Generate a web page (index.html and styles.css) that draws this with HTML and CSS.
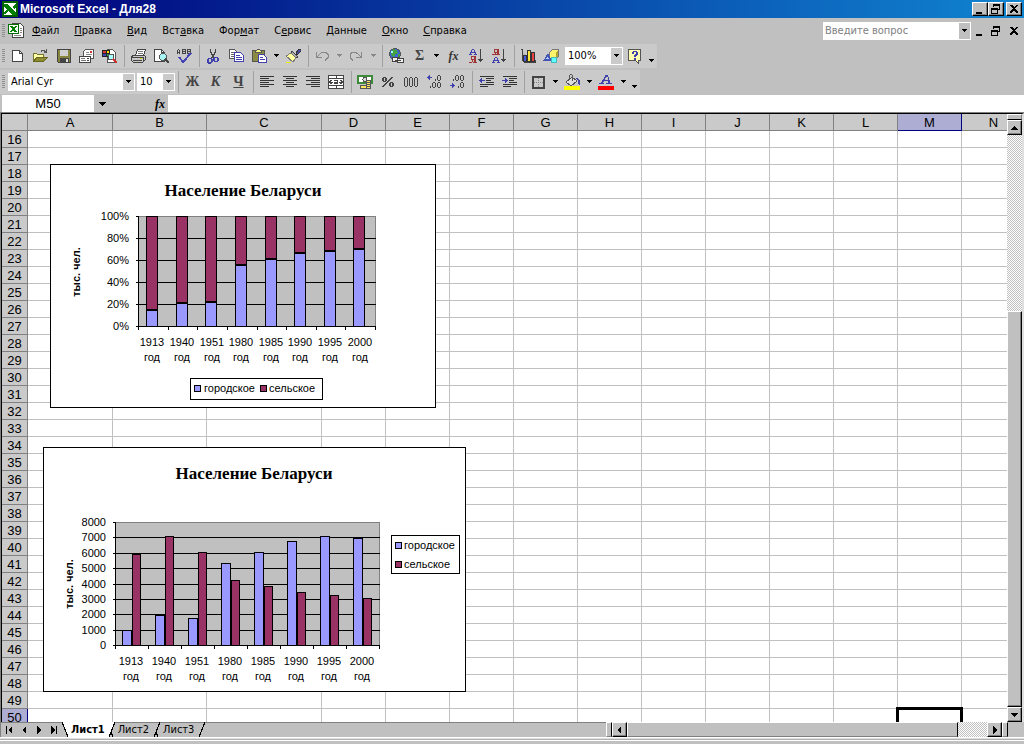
FILE: index.html
```html
<!DOCTYPE html>
<html lang="ru">
<head>
<meta charset="utf-8">
<title>Microsoft Excel - Для28</title>
<link rel="stylesheet" href="styles.css">
</head>
<body>
<svg class="symbols" aria-hidden="true">
  <symbol id="xl" viewBox="0 0 16 16"><path fill="#006000" d="M0 0h16v16H0z"/><path fill="#fff" d="M2 2h12v12H2z"/><path fill="#008000" d="M2 3h4l8 9v2h-4L2 5z"/><path fill="#008000" d="M14 3v3l-2 2-2-2 3-3zM2 13v-2l3-3 1 2-3 3z"/></symbol>
  <symbol id="book" viewBox="0 0 16 16"><path fill="#fff" stroke="#444" d="M4.500 .5h8l3 3v11h-11z"/><path stroke="#888" d="M12 5.500h2M12 7.500h2M12 9.500h2M6 12.500h7"/><path fill="#fff" stroke="#007000" d="M.5 1.500h10v9H.5z"/><path fill="#008000" d="M2 3h3l4 6H6z"/><path stroke="#008000" stroke-width="1.500" d="M8 3L3 9"/></symbol>
  <symbol id="min" viewBox="0 0 12 10"><path fill="#000" d="M2 8h6v2H2z"/></symbol>
  <symbol id="restore" viewBox="0 0 12 10"><path fill="none" stroke="#000" d="M3.500 3V.5h6v5H8M3 1.500h7M1.500 4.500h6v5h-6zM1 5.500h7"/></symbol>
  <symbol id="close" viewBox="0 0 12 10"><path fill="#000" d="M2 1h2l2 2 2-2h2L7 4.500 10 8v1H8L6 6 4 9H2V8l3-3.500z"/></symbol>
  <symbol id="down" viewBox="0 0 7 4"><path fill="currentColor" d="M1 0h5v1H1zM2 1h3v1H2zM3 2h1v1H3z"/></symbol>
  <symbol id="downbig" viewBox="0 0 7 4"><path fill="currentColor" d="M0 0h7v1H0zM1 1h5v1H1zM2 2h3v1H2zM3 3h1v1H3z"/></symbol>
  <symbol id="new" viewBox="0 0 16 16"><path fill="#fff" stroke="#444" d="M3.500 2.500h7l3 3v8h-10z"/><path fill="none" stroke="#444" d="M10.500 2.500v3h3"/></symbol>
  <symbol id="open" viewBox="0 0 16 16"><path fill="#ffffa8" stroke="#77772c" d="M1.500 13.500v-8h3l1 1h6v3"/><path fill="#8d8d2e" stroke="#666620" d="M1.500 13.500l3-4h11l-4 4z"/><path fill="none" stroke="#555" d="M9 3.500l1-1h2l2 2M14.500 1v4M12 4.500h3"/></symbol>
  <symbol id="save" viewBox="0 0 16 16"><path fill="#85853b" stroke="#444" d="M2.500 1.500h13v13h-12l-1-1z"/><path fill="#d0d0d0" d="M5 2h8v6H5z"/><path fill="#444" d="M5 10h9v4H5z"/><path fill="#ddd" d="M11 11h2v3h-2z"/></symbol>
  <symbol id="mail" viewBox="0 0 16 16"><path fill="#fff" stroke="#555" d="M5.500 7.500v-4l2-2h8v9h-3"/><path stroke="#888" d="M8 4.500h3M8 6.500h6"/><path fill="#c33" d="M12 3h2v2h-2z"/><path fill="#fff" stroke="#444" d="M1.500 8.500h11v6h-11z"/><path stroke="#777" d="M3 10.500h4M3 12.500h5"/><path stroke="#444" d="M9 10.500h2M9 12.500h2"/></symbol>
  <symbol id="search" viewBox="0 0 16 16"><path fill="#fff" stroke="#555" d="M6.500 1.500h5l3 3v10h-8z"/><path fill="#222" d="M1 2h8v7H1z"/><path fill="#d33" d="M2 3h3v2H2z"/><path fill="#fd0" d="M6 3h2v2H6z"/><path fill="#44b" d="M2 6h3v2H2z"/><path fill="#3a3" d="M6 6h2v2H6z"/><circle cx="10" cy="9" r="3" fill="#a8ffff" stroke="#555"/><path stroke="#c33" stroke-width="2" d="M12 11l4 4"/></symbol>
  <symbol id="print" viewBox="0 0 16 16"><path fill="#fff" stroke="#444" d="M5.500 7.500l2-6h8l-2 6"/><path stroke="#777" d="M8 3.500h5M8 5.500h5"/><path fill="#c8c8c8" stroke="#444" d="M1.500 8.500l2-1h11l1 1v3l-3 3h-9l-2-2z"/><path stroke="#444" d="M1 9.500h12M3 12.500h9M13.500 9v4"/><path fill="#dd0" d="M10 10h2v1h-2z"/></symbol>
  <symbol id="preview" viewBox="0 0 16 16"><path fill="#fff" stroke="#444" d="M1.500 1.500h7l3 3v9h-10z"/><path fill="none" stroke="#444" d="M8.500 1.500v3h3"/><circle cx="10" cy="9" r="3.500" fill="#a8f4f4" stroke="#555"/><path stroke="#444" stroke-width="2" d="M12 11l4 4"/></symbol>
  <symbol id="spell" viewBox="0 0 16 16"><path fill="none" stroke="#444" d="M1.500 6V2.500l1-1 1 1V6M1 4.500h3M6.500 1v5M6 1.500h3v4H6M6 3.500h3M11.500 1v5M11 1.500h3v4h-3M11 3.500h3"/><path fill="none" stroke="#4545b5" stroke-width="2" d="M3 9l4 5 8-9"/></symbol>
  <symbol id="cut" viewBox="0 0 16 16"><path fill="none" stroke="#444" stroke-width="1.500" d="M5.500 1v3l4 6M10.500 1v3l-4 6"/><path fill="none" stroke="#4141ad" stroke-width="1.500" d="M4 10.500h2l1 1v2l-2 1.500H4l-1-1v-2.500zM10 9.500h2l1 1v2l-1 1h-2l-1-1v-2z"/></symbol>
  <symbol id="copy" viewBox="0 0 16 16"><path fill="#fff" stroke="#555" d="M1.500 1.500h5l3 3v6h-8z"/><path stroke="#666" d="M3 4.500h3M3 6.500h4M3 8.500h3"/><path fill="#fff" stroke="#4141ad" d="M6.500 4.500h6l3 3v6h-9z"/><path stroke="#4141ad" d="M8 7.500h4M8 9.500h6M8 11.500h6"/></symbol>
  <symbol id="paste" viewBox="0 0 16 16"><path fill="#8b8b42" stroke="#555" d="M1.500 2.500h12v11h-12z"/><path fill="#ffff80" stroke="#555" d="M4.500 3.500l2-2h2l2 2v1h-6z"/><path fill="#fff" stroke="#4141ad" d="M7.500 6.500h5l3 3v5h-8z"/><path stroke="#4141ad" d="M9 9.500h3M9 11.500h5"/></symbol>
  <symbol id="brush" viewBox="0 0 16 16"><path fill="#4949a8" stroke="#333" d="M11 5l3-4h2v2l-4 4z"/><path fill="#aaa" stroke="#444" d="M7 3l6 6-2 1-5-5z"/><path fill="#ffff9c" stroke="#777" d="M6 5l5 5-3 4-7-6z"/><path fill="#ee0" d="M1 14h5v1H1z"/></symbol>
  <symbol id="undo" viewBox="0 0 16 16"><path fill="none" stroke="#888" d="M2.500 4v5.500H8M3 9l3-3 2-1.500h4l2 2v3l-3 3"/></symbol>
  <symbol id="redo" viewBox="0 0 16 16"><path fill="none" stroke="#888" d="M13.500 4v5.500H8M13 9l-3-3-2-1.500H4l-2 2v3l3 3"/></symbol>
  <symbol id="link" viewBox="0 0 16 16"><circle cx="7" cy="6" r="5.500" fill="#3b68cf" stroke="#555"/><path fill="#43a343" d="M5 1l4 1 1 3-3 1-1 4-3-3zM11 4l1 3-2 2z"/><path fill="#9ff" d="M3 3h2v2H3z"/><rect x="4.500" y="9.500" width="6" height="4" rx="1" fill="#eee" stroke="#444"/><rect x="9.500" y="10.500" width="6" height="4" rx="1" fill="#eee" stroke="#444"/><path stroke="#444" d="M7 12.500h6"/></symbol>
  <symbol id="sortaz" viewBox="0 0 16 16"><path fill="none" stroke="#4141ad" d="M1 6.500h3M6 6.500h3M2.500 6V4M7.500 6V4M3.500 4V2M6.500 4V2M4 1.500h2M3 4.500h4"/><path fill="none" stroke="#a03535" d="M7.500 8v7M6.500 8v7M8 8.500H3M3.500 9v3M3 11.500h4M4.500 12v2M1 14.500h3M5 14.500h4"/><path fill="none" stroke="#444" d="M12.500 1v13M10 11.500h5M11 12.500h3M12 13.500h1"/></symbol>
  <symbol id="sortza" viewBox="0 0 16 16"><path fill="none" stroke="#a03535" d="M7.500 1v6M6.500 1v6M8 1.500H3M3.500 2v3M3 4.500h4M4.500 5v2M1 6.500h3M5 6.500h4"/><path fill="none" stroke="#4141ad" d="M1 14.500h3M6 14.500h3M2.500 14v-2M7.500 14v-2M3.500 12v-2M6.500 12v-2M4 9.500h2M3 12.500h4"/><path fill="none" stroke="#444" d="M12.500 1v13M10 11.500h5M11 12.500h3M12 13.500h1"/></symbol>
  <symbol id="chart" viewBox="0 0 16 16"><path fill="#bbb" stroke="#444" d="M.5 1.500h2v11l2 2h11v-2h-3"/><path fill="#4858e0" stroke="#333" d="M3.500 7.500h3v6h-3z"/><path fill="#ffe83b" stroke="#333" d="M7.500 2.500h3v11h-3z"/><path fill="#e34343" stroke="#333" d="M11.500 4.500h3v9h-3z"/></symbol>
  <symbol id="draw" viewBox="0 0 16 16"><path fill="#fff36b" stroke="#777" d="M6.500 4.500l3-3h6v7l-2 2h-7z"/><path fill="#b3a22e" d="M13 4l2-2v6l-2 3z"/><path fill="#4555b5" d="M5 5l4 8H0z"/><path fill="#b6d0ff" d="M5 8l1 3H3z"/><circle cx="11" cy="12" r="3" fill="#5fffff" stroke="#48b8b8"/></symbol>
  <symbol id="help" viewBox="0 0 16 16"><path fill="#ffffb0" stroke="#555" d="M2.500 1.500h12v11h-2v3l-3-3h-7z"/><path fill="#4141ad" d="M6 4h1V3h4v1h1v3h-1v1h-1v1H8V7h1V6h1V4H8v2H6zM8 10h2v2H8z"/></symbol>
  <symbol id="left" viewBox="0 0 16 16"><path stroke="#333" d="M1 2.500h14M1 4.500h9M1 6.500h14M1 8.500h9M1 10.500h14M1 12.500h9"/></symbol>
  <symbol id="center" viewBox="0 0 16 16"><path stroke="#333" d="M1 2.500h14M4 4.500h8M1 6.500h14M4 8.500h8M1 10.500h14M4 12.500h8"/></symbol>
  <symbol id="right" viewBox="0 0 16 16"><path stroke="#333" d="M1 2.500h14M6 4.500h9M1 6.500h14M6 8.500h9M1 10.500h14M6 12.500h9"/></symbol>
  <symbol id="merge" viewBox="0 0 16 16"><path fill="#fff" stroke="#444" d="M.5 1.500h15v13H.5z"/><path fill="none" stroke="#444" d="M0 4.500h16M0 11.500h16M8.500 1v3M8.500 12v3M1 8h4M3.500 6L1.500 8l2 2M15 8h-4M12.500 6l2 2-2 2M6 6.500h3.500v3H6.500v-1.500h3"/></symbol>
  <symbol id="money" viewBox="0 0 16 16"><path fill="#fff" stroke="#3d8a3d" stroke-width="2" d="M1 2h14v7H1z"/><circle cx="8" cy="5.500" r="2" fill="#ddd" stroke="#555"/><path fill="#ffe860" stroke="#555" d="M9.500 6.500h4v8h-4zM3.500 11.500h6v3h-6z"/><path stroke="#555" d="M9 8.500h5M9 10.500h5M9 12.500h5"/></symbol>
  <symbol id="percent" viewBox="0 0 16 16"><path fill="#444" d="M3 3h3v1H3zM3 7h3v1H3zM2 4h2v3H2zM5 4h2v3H5zM10 8h3v1h-3zM10 12h3v1h-3zM9 9h2v3H9zM12 9h2v3h-2zM11 3h2v1h-1v1h-1v1h-1v1H9v1H8v1H7v1H6v1H5v1H4v1H2v-1h1v-1h1v-1h1V9h1V8h1V7h1V6h1V5h1V4h1z"/></symbol>
  <symbol id="zeros" viewBox="0 0 16 16"><path fill="#444" d="M1 4h1v8H1zM4 4h1v8H4zM2 3h2v1H2zM2 12h2v1H2zM6 4h1v8H6zM9 4h1v8H9zM7 3h2v1H7zM7 12h2v1H7zM11 4h1v8h-1zM14 4h1v8h-1zM12 3h2v1h-2zM12 12h2v1h-2z"/></symbol>
  <symbol id="inc" viewBox="0 0 16 16"><path fill="none" stroke="#4141ad" d="M1 3.500h5M2.500 2v3M3.500 1v5"/><path fill="#444" d="M9 5h1v2H9zM11 2h1v4h-1zM14 2h1v4h-1zM12 1h2v1h-2zM12 6h2v1h-2zM4 12h1v2H4zM6 9h1v4H6zM9 9h1v4H9zM7 8h2v1H7zM7 13h2v1H7zM11 9h1v4h-1zM14 9h1v4h-1zM12 8h2v1h-2zM12 13h2v1h-2z"/></symbol>
  <symbol id="dec" viewBox="0 0 16 16"><path fill="none" stroke="#4141ad" d="M1 11.500h5M4.500 10v3M3.500 9v5"/><path fill="#444" d="M4 5h1v2H4zM6 2h1v4H6zM9 2h1v4H9zM7 1h2v1H7zM7 6h2v1H7zM11 2h1v4h-1zM14 2h1v4h-1zM12 1h2v1h-2zM12 6h2v1h-2zM9 12h1v2H9zM11 9h1v4h-1zM14 9h1v4h-1zM12 8h2v1h-2zM12 13h2v1h-2z"/></symbol>
  <symbol id="outdent" viewBox="0 0 16 16"><path stroke="#333" d="M2 2.500h14M8 4.500h8M8 6.500h5M8 8.500h8M2 10.500h14M2 12.500h8"/><path stroke="#4141ad" fill="none" d="M1 6.500h6M3.500 4v5M2.500 5v3"/></symbol>
  <symbol id="indent" viewBox="0 0 16 16"><path stroke="#333" d="M2 2.500h14M8 4.500h8M8 6.500h5M8 8.500h8M2 10.500h14M2 12.500h8"/><path stroke="#4141ad" fill="none" d="M1 6.500h6M4.500 4v5M5.500 5v3"/></symbol>
  <symbol id="border" viewBox="0 0 16 16"><path fill="none" stroke="#444" stroke-width="2" d="M3 3h11v11H3z"/><path fill="none" stroke="#888" stroke-dasharray="1 1" d="M8.500 4v9M4 8.500h9"/></symbol>
  <symbol id="fill" viewBox="0 0 16 16"><path fill="#ddd" stroke="#555" d="M2 8l6-5 5 4-6 5z"/><path fill="none" stroke="#555" d="M5.500 6V1.500l1-1h1l1 1V7"/><path fill="#4545aa" d="M11 4h3l2 3v4l-2-1V7z"/><path fill="#ff0" d="M0 12h16v4H0z"/></symbol>
  <symbol id="color" viewBox="0 0 16 16"><path fill="#4141ad" d="M7 1h3v2h1v3h1v3h2v1H8V9h2V7H6v1H5v1h1v1H1V9h2V8h1V6h1V5h1V3h1zM8 3v1H7v2h3V3z"/><path fill="#f00" d="M0 12h16v4H0z"/></symbol>
</svg>

<header class="titlebar">
  <svg class="icon"><use href="#xl"/></svg>
  <h1 class="app-title">Microsoft Excel - Для28</h1>
  <div class="win-buttons">
    <button class="win-btn" aria-label="Свернуть"><svg class="glyph"><use href="#min"/></svg></button>
    <button class="win-btn" aria-label="Восстановить"><svg class="glyph"><use href="#restore"/></svg></button>
    <button class="win-btn win-close" aria-label="Закрыть"><svg class="glyph"><use href="#close"/></svg></button>
  </div>
</header>

<nav class="menubar" aria-label="Меню">
  <span class="grip"></span>
  <svg class="icon book"><use href="#book"/></svg>
  <button class="menu"><u>Ф</u>айл</button>
  <button class="menu"><u>П</u>равка</button>
  <button class="menu"><u>В</u>ид</button>
  <button class="menu">Вст<u>а</u>вка</button>
  <button class="menu">Фор<u>м</u>ат</button>
  <button class="menu">С<u>е</u>рвис</button>
  <button class="menu"><u>Д</u>анные</button>
  <button class="menu"><u>О</u>кно</button>
  <button class="menu"><u>С</u>правка</button>
  <div class="ask"><input class="ask-input" aria-label="Введите вопрос" placeholder="Введите вопрос"><button class="ask-btn" aria-label="Список вопросов"><svg class="tri"><use href="#down"/></svg></button></div>
  <div class="doc-buttons">
    <button class="doc-btn" aria-label="Свернуть окно"><svg class="glyph"><use href="#min"/></svg></button>
    <button class="doc-btn" aria-label="Восстановить окно"><svg class="glyph"><use href="#restore"/></svg></button>
    <button class="doc-btn doc-close" aria-label="Закрыть окно"><svg class="glyph"><use href="#close"/></svg></button>
  </div>
</nav>

<div class="toolbar" role="toolbar" aria-label="Стандартная">
  <span class="grip"></span>
  <button class="tool" aria-label="Создать"><svg class="icon"><use href="#new"/></svg></button>
  <button class="tool" aria-label="Открыть"><svg class="icon"><use href="#open"/></svg></button>
  <button class="tool" aria-label="Сохранить"><svg class="icon"><use href="#save"/></svg></button>
  <button class="tool" aria-label="Сообщение"><svg class="icon"><use href="#mail"/></svg></button>
  <button class="tool" aria-label="Поиск"><svg class="icon"><use href="#search"/></svg></button>
  <span class="sep"></span>
  <button class="tool" aria-label="Печать"><svg class="icon"><use href="#print"/></svg></button>
  <button class="tool" aria-label="Просмотр"><svg class="icon"><use href="#preview"/></svg></button>
  <button class="tool" aria-label="Орфография"><svg class="icon"><use href="#spell"/></svg></button>
  <span class="sep"></span>
  <button class="tool" aria-label="Вырезать"><svg class="icon"><use href="#cut"/></svg></button>
  <button class="tool" aria-label="Копировать"><svg class="icon"><use href="#copy"/></svg></button>
  <button class="tool" aria-label="Вставить"><svg class="icon"><use href="#paste"/></svg></button>
  <button class="drop" aria-label="Параметры вставки"><svg class="tri"><use href="#down"/></svg></button>
  <button class="tool" aria-label="Формат по образцу"><svg class="icon"><use href="#brush"/></svg></button>
  <span class="sep"></span>
  <button class="tool" aria-label="Отменить" disabled><svg class="icon"><use href="#undo"/></svg></button>
  <button class="drop" aria-label="Список отмены" disabled><svg class="tri"><use href="#down"/></svg></button>
  <button class="tool" aria-label="Вернуть" disabled><svg class="icon"><use href="#redo"/></svg></button>
  <button class="drop" aria-label="Список возврата" disabled><svg class="tri"><use href="#down"/></svg></button>
  <span class="sep"></span>
  <button class="tool" aria-label="Гиперссылка"><svg class="icon"><use href="#link"/></svg></button>
  <button class="tool letter">Σ</button>
  <button class="drop" aria-label="Функции суммы"><svg class="tri"><use href="#down"/></svg></button>
  <button class="tool fx">fx</button>
  <button class="tool" aria-label="По возрастанию"><svg class="icon"><use href="#sortaz"/></svg></button>
  <button class="tool" aria-label="По убыванию"><svg class="icon"><use href="#sortza"/></svg></button>
  <span class="sep"></span>
  <button class="tool" aria-label="Мастер диаграмм"><svg class="icon"><use href="#chart"/></svg></button>
  <button class="tool" aria-label="Рисование"><svg class="icon"><use href="#draw"/></svg></button>
  <span class="combo zoom"><select class="combo-select" aria-label="Масштаб"><option>100%</option></select><svg class="tri"><use href="#down"/></svg></span>
  <button class="tool" aria-label="Справка"><svg class="icon"><use href="#help"/></svg></button>
  <button class="drop more" aria-label="Параметры панели"><svg class="tri"><use href="#down"/></svg></button>
</div>

<div class="toolbar" role="toolbar" aria-label="Форматирование">
  <span class="grip"></span>
  <span class="combo font"><select class="combo-select" aria-label="Шрифт"><option>Arial Cyr</option></select><svg class="tri"><use href="#down"/></svg></span>
  <span class="combo size"><select class="combo-select" aria-label="Размер"><option>10</option></select><svg class="tri"><use href="#down"/></svg></span>
  <span class="sep"></span>
  <button class="tool letter">Ж</button>
  <button class="tool letter"><i>К</i></button>
  <button class="tool letter"><u>Ч</u></button>
  <span class="sep"></span>
  <button class="tool" aria-label="По левому краю"><svg class="icon"><use href="#left"/></svg></button>
  <button class="tool" aria-label="По центру"><svg class="icon"><use href="#center"/></svg></button>
  <button class="tool" aria-label="По правому краю"><svg class="icon"><use href="#right"/></svg></button>
  <button class="tool" aria-label="Объединить"><svg class="icon"><use href="#merge"/></svg></button>
  <span class="sep"></span>
  <button class="tool" aria-label="Денежный формат"><svg class="icon"><use href="#money"/></svg></button>
  <button class="tool" aria-label="Процентный формат"><svg class="icon"><use href="#percent"/></svg></button>
  <button class="tool" aria-label="Формат с разделителями"><svg class="icon"><use href="#zeros"/></svg></button>
  <button class="tool" aria-label="Увеличить разрядность"><svg class="icon"><use href="#inc"/></svg></button>
  <button class="tool" aria-label="Уменьшить разрядность"><svg class="icon"><use href="#dec"/></svg></button>
  <span class="sep"></span>
  <button class="tool" aria-label="Уменьшить отступ"><svg class="icon"><use href="#outdent"/></svg></button>
  <button class="tool" aria-label="Увеличить отступ"><svg class="icon"><use href="#indent"/></svg></button>
  <span class="sep"></span>
  <button class="tool" aria-label="Границы"><svg class="icon"><use href="#border"/></svg></button>
  <button class="drop" aria-label="Виды границ"><svg class="tri"><use href="#down"/></svg></button>
  <button class="tool" aria-label="Цвет заливки"><svg class="icon"><use href="#fill"/></svg></button>
  <button class="drop" aria-label="Цвета заливки"><svg class="tri"><use href="#down"/></svg></button>
  <button class="tool" aria-label="Цвет шрифта"><svg class="icon"><use href="#color"/></svg></button>
  <button class="drop" aria-label="Цвета шрифта"><svg class="tri"><use href="#down"/></svg></button>
  <button class="drop more" aria-label="Параметры панели"><svg class="tri"><use href="#down"/></svg></button>
</div>

<div class="formula">
  <input class="name-box" aria-label="Имя ячейки" value="M50">
  <button class="name-drop" aria-label="Список имён"><svg class="tri"><use href="#downbig"/></svg></button>
  <button class="formula-fx">fx</button>
  <input class="formula-input" aria-label="Строка формул">
</div>

<main class="workspace">
  <div class="sheet">
    <table class="grid" id="grid"></table>
    <figure class="chart chart-share" id="share"></figure>
    <figure class="chart chart-count" id="count"></figure>
  </div>
  <div class="vscroll">
    <span class="vsplit"></span>
    <button class="scroll-btn" aria-label="Вверх"><svg class="arrow" viewBox="0 0 8 8"><path d="M0 6h7v-1H6V4H5V3H4V2H3v1H2v1H1v1H0z"/></svg></button>
    <span class="vtrack"></span>
    <span class="vthumb"></span>
    <button class="scroll-btn" aria-label="Вниз"><svg class="arrow" viewBox="0 0 8 8"><path d="M0 2h7v1H6v1H5v1H4v1H3V5H2V4H1V3H0z"/></svg></button>
  </div>
</main>

<footer class="bottom">
  <div class="tabs">
    <button class="nav" aria-label="Первый лист"><svg class="arrow" viewBox="0 0 8 8"><path d="M1 0h1v8H1zM7 0v8L3 4z"/></svg></button>
    <button class="nav" aria-label="Предыдущий лист"><svg class="arrow" viewBox="0 0 8 8"><path d="M6 0v8L2 4z"/></svg></button>
    <button class="nav" aria-label="Следующий лист"><svg class="arrow" viewBox="0 0 8 8"><path d="M2 0v8l4-4z"/></svg></button>
    <button class="nav" aria-label="Последний лист"><svg class="arrow" viewBox="0 0 8 8"><path d="M1 0v8l4-4zM6 0h1v8H6z"/></svg></button>
    <svg class="edge" viewBox="0 0 9 15"><path fill="#fff" d="M1 0h8v15H7z"/><path class="slash" d="M1 0l6 15"/></svg>
    <button class="tab active">Лист1</button>
    <svg class="edge" viewBox="0 0 9 15"><path fill="#fff" d="M0 0h8L2 15H0z"/><path class="slash" d="M8 0L2 15M4 10l2 5"/></svg>
    <button class="tab">Лист2</button>
    <svg class="edge" viewBox="0 0 9 15"><path class="slash" d="M8 0L2 15M4 10l2 5"/></svg>
    <button class="tab">Лист3</button>
    <svg class="edge" viewBox="0 0 9 15"><path class="slash" d="M8 0L2 15"/></svg>
  </div>
  <div class="hscroll">
    <span class="hsplit"></span>
    <button class="scroll-btn" aria-label="Влево"><svg class="arrow" viewBox="0 0 8 8"><path d="M5 0v8L1 4z"/></svg></button>
    <span class="hthumb"></span>
    <span class="htrack"></span>
    <button class="scroll-btn" aria-label="Вправо"><svg class="arrow" viewBox="0 0 8 8"><path d="M2 0v8l4-4z"/></svg></button>
    <span class="hsplit"></span>
    <span class="corner"></span>
  </div>
</footer>
<div class="status"></div>
<script src="app.js"></script>
</body>
</html>
```
FILE: styles.css
```css
* { box-sizing: border-box; }
html, body { height: 100%; }
body {
  margin: 0;
  display: flex;
  flex-direction: column;
  overflow: hidden;
  background: #c0c0c0;
  color: #000;
  font: 11px/14px "DejaVu Sans Condensed", "DejaVu Sans", sans-serif;
}
button, input, select { font: inherit; color: inherit; margin: 0; border: 0; padding: 0; border-radius: 0; background: none; }
svg { display: block; flex: none; shape-rendering: crispEdges; }
.symbols { position: absolute; width: 0; height: 0; }
.icon { width: 16px; height: 16px; fill: none; }
.tri { width: 7px; height: 4px; }
.glyph { width: 12px; height: 10px; }
.arrow { width: 8px; height: 8px; }

.titlebar { display: flex; align-items: center; height: 18px; flex: none; padding: 0 2px; background: linear-gradient(90deg, #00007b, #1084d0); color: #fff; }
.app-title { flex: 1; margin: 0 0 0 2px; font: bold 12px/16px "Liberation Sans", Arial, sans-serif; }
.win-buttons { display: flex; }
.win-btn { width: 16px; height: 14px; padding: 1px; background: #c0c0c0; border: 1px solid; border-color: #fff #000 #000 #fff; box-shadow: inset -1px -1px #808080; }
.win-close { margin-left: 2px; }

.menubar { display: flex; align-items: center; height: 26px; flex: none; padding-left: 2px; }
.grip { width: 3px; height: 14px; margin-right: 1px; background: repeating-linear-gradient(#909090 0 1px, transparent 1px 2px); }
.book { margin: 0 1px 0 2px; }
.menu { padding: 0 8px 0 7px; }
.ask { display: flex; width: 148px; height: 18px; margin-left: auto; background: #fff; padding: 1px; }
.ask-input { flex: 1; min-width: 0; padding: 0 1px; }
.ask-input::placeholder { color: #808080; opacity: 1; }
.ask-btn { width: 11px; background: #c0c0c0; padding: 0 2px; }
.doc-buttons { display: flex; padding: 0 1px 0 2px; }
.doc-btn { width: 16px; height: 14px; padding: 1px; }
.doc-close { margin-left: 2px; }

.toolbar { display: flex; align-items: center; align-self: flex-start; height: 24px; flex: none; padding-left: 2px; margin-bottom: 2px; background: #cacaca; border-radius: 0 2px 2px 0; }
.toolbar + .formula { margin-top: -1px; }
.tool { width: 23px; height: 22px; padding: 0 0 0 3px; flex: none; }
.drop { width: 11px; height: 22px; padding: 0 2px; flex: none; }
.drop:disabled { color: #888; }
.more { padding-top: 10px; }
.sep { width: 1px; height: 22px; margin: 0 2px 0 3px; background: #a0a0a0; }
.letter { padding: 0; color: #444; font: bold 14px/20px "Liberation Serif", serif; }
.fx { padding: 0; color: #333; font: italic bold 12px/20px "Liberation Serif", serif; }
.combo { display: flex; align-items: center; height: 18px; background: #fff; padding: 1px; flex: none; position: relative; }
.combo-select { appearance: none; width: 100%; height: 16px; padding: 0 2px; border-right: 11px solid #cacaca; }
.combo .tri { position: absolute; right: 3px; top: 7px; pointer-events: none; }
.font { width: 127px; margin: 0 2px; }
.size { width: 38px; }
.zoom { width: 58px; margin: 0 0 0 2px; }

.formula { display: flex; height: 17px; flex: none; padding-left: 2px; }
.name-box { width: 92px; background: #fff; text-align: center; font: 13px/17px "Liberation Sans", Arial, sans-serif; }
.name-drop { width: 16px; padding: 0 5px; }
.formula-fx { width: 58px; padding: 0 3px; text-align: right; font: italic bold 12px/16px "Liberation Serif", serif; }
.formula-input { flex: 1; min-width: 0; background: #fff; }

.workspace { display: flex; flex: 1; min-height: 0; border-top: 1px solid #808080; border-left: 1px solid #808080; }
.sheet { flex: 1; min-width: 0; position: relative; overflow: hidden; background: #fff; border-top: 1px solid #000; border-left: 1px solid #000; }
.grid { table-layout: fixed; border-collapse: separate; border-spacing: 0; width: 1024px; font: 13px/15px "Liberation Sans", Arial, sans-serif; }
.grid th, .grid td { height: 17px; padding: 0; border: solid #c0c0c0; border-width: 0 1px 1px 0; }
.grid th { padding-top: 1px; background: #cacaca; border-color: #808080; font-weight: normal; text-align: center; }
.grid th.picked { background: #adadd3; border-color: #000080; }
.col-head { width: 26px; }
.col-a { width: 85px; }
.col-b { width: 94px; }
.col-c { width: 115px; }
.col-std { width: 64px; }
.cursor-cell { position: relative; }
.cursor { position: absolute; inset: -2px; border: 3px solid #000; }

.chart { position: absolute; margin: 0; background: #fff; border: 1px solid #000; }
.chart svg { margin: -1px; font: 11px "Liberation Sans", Arial, sans-serif; }
.chart-share { left: 48px; top: 50px; width: 386px; height: 244px; }
.chart-count { left: 41px; top: 333px; width: 423px; height: 245px; }
.chart-title { font: bold 17px "Liberation Serif", serif; text-anchor: middle; }
.axis-title { font-weight: bold; text-anchor: middle; }
.end { text-anchor: end; }
.mid { text-anchor: middle; }
.plot { fill: #c0c0c0; stroke: #808080; }
.line { stroke: #000; fill: none; }
.urban { fill: #9999ff; stroke: #000; }
.rural { fill: #993366; stroke: #000; }
.box { fill: #fff; stroke: #000; }

.vscroll { display: flex; flex-direction: column; width: 17px; flex: none; border-top: 1px solid #000; border-right: 2px solid #dfdfdf; }
.vsplit { height: 6px; flex: none; background: #c0c0c0; border: 1px solid; border-color: #fff #808080 #000 #fff; }
.scroll-btn { display: flex; align-items: center; justify-content: center; width: 15px; height: 15px; flex: none; background: #c0c0c0; border: 1px solid; border-color: #fff #000 #000 #fff; box-shadow: inset -1px -1px #808080; }
.vtrack, .htrack { background: repeating-conic-gradient(#fff 0 25%, #c0c0c0 0 50%) 0 0 / 2px 2px; }
.vtrack { flex: 177; }
.vthumb { flex: 395; background: #c0c0c0; border: 1px solid; border-color: #fff #000 #000 #fff; box-shadow: inset -1px -1px #808080; }

.bottom { display: flex; height: 15px; flex: none; border-left: 1px solid #808080; }
.tabs { display: flex; flex: 605; box-shadow: inset 0 1px #808080; }
.nav { display: flex; align-items: center; justify-content: center; width: 15px; height: 15px; }
.edge { width: 9px; height: 15px; }
.slash { stroke: #000; fill: none; }
.tab { height: 15px; line-height: 15px; padding: 0 3px 0 2px; }
.tab.active { background: #fff; font-weight: bold; padding: 0 2px 0 1px; }
.hscroll { display: flex; flex: 418; }
.hsplit { width: 6px; background: #c0c0c0; border: 1px solid; border-color: #fff #000 #808080 #fff; flex: none; }
.hthumb { flex: 331; background: #c0c0c0; border: 1px solid; border-color: #fff #000 #808080 #fff; }
.htrack { flex: 29; }
.corner { width: 16px; flex: none; }
.status { height: 7px; flex: none; border-top: 1px solid #fff; background: linear-gradient(#dfdfdf 0 1px, #b0b0b0 1px 2px, #fff 2px 3px, #c0c0c0 3px); }
```
FILE: app.js
```js
const columns = "ABCDEFGHIJKLMN".split("");
const widths = { A: "col-a", B: "col-b", C: "col-c" };
const firstRow = 16, lastRow = 50;

const colgroup = '<col class="col-head">' +
  columns.map(c => `<col class="${widths[c] || "col-std"}">`).join("");
const head = "<tr><th></th>" +
  columns.map(c => `<th scope="col"${c === "M" ? ' class="picked"' : ""}>${c}</th>`).join("") + "</tr>";
let body = "";
for (let r = firstRow; r <= lastRow; r++) {
  body += `<tr><th scope="row"${r === 50 ? ' class="picked"' : ""}>${r}</th>` +
    columns.map(c => r === 50 && c === "M"
      ? '<td class="cursor-cell"><div class="cursor"></div></td>' : "<td></td>").join("") + "</tr>";
}
document.getElementById("grid").innerHTML =
  `<colgroup>${colgroup}</colgroup><thead>${head}</thead><tbody>${body}</tbody>`;

const years = [1913, 1940, 1951, 1980, 1985, 1990, 1995, 2000];
const title = "Население Беларуси";
const rect = (cls, x, y, w, h) =>
  `<rect class="${cls}" x="${x + 0.5}" y="${y + 0.5}" width="${w - 1}" height="${h - 1}"/>`;
const line = (x1, y1, x2, y2) =>
  `<path class="line" d="M${x1 + 0.5} ${y1 + 0.5}L${x2 + 0.5} ${y2 + 0.5}"/>`;
const text = (cls, x, y, s) => `<text class="${cls}" x="${x}" y="${y}">${s}</text>`;

function frame(p) {
  let s = rect("plot", p.x, p.y, p.w + 1, p.h + 1);
  for (let i = 0; i <= p.steps; i++) {
    const y = Math.round(p.y + p.h - p.h * i / p.steps);
    if (i < p.steps) s += line(p.x, y, p.x + p.w, y);
    s += line(p.x - 3, y, p.x, y) + text("end", p.x - 9, y + 4, p.label(i));
  }
  s += line(p.x, p.y, p.x, p.y + p.h);
  for (let i = 0; i <= 8; i++) {
    const x = Math.round(p.x + p.w * i / 8);
    s += line(x, p.y + p.h, x, p.y + p.h + 3);
    if (i < 8) {
      const c = Math.floor(p.x + p.w * (i + 0.5) / 8);
      s += text("mid", c, p.y + p.h + 20, years[i]) + text("mid", c, p.y + p.h + 35, "год");
    }
  }
  return s;
}
const axis = (x, y) =>
  `<text class="axis-title" transform="translate(${x} ${y}) rotate(-90)">тыс. чел.</text>`;
const svg = (w, h, s) => `<svg width="${w}" height="${h}" role="img" aria-label="${title}">${s}</svg>`;

const share = [14.5, 21, 22, 55.5, 61, 66.5, 68.5, 70];
const p1 = { x: 88, y: 52, w: 237, h: 110, steps: 5, label: i => i * 20 + "%" };
let s1 = text("chart-title", 193, 32, title) + axis(30, 108) + frame(p1);
share.forEach((v, i) => {
  const x = Math.round(p1.x + 8 + i * p1.w / 8);
  const y = Math.round(p1.y + p1.h * (1 - v / 100));
  s1 += rect("rural", x, p1.y, 12, y - p1.y) + rect("urban", x, y, 12, p1.y + p1.h - y + 1);
});
s1 += rect("box", 140, 214, 133, 22) + rect("urban", 144, 221, 7, 7) + text("", 154, 228, "городское") +
  rect("rural", 210, 221, 7, 7) + text("", 219, 228, "сельское");
document.getElementById("share").innerHTML = svg(386, 244, s1);

const urban = [980, 1950, 1750, 5330, 6050, 6770, 7100, 6960];
const rural = [5900, 7100, 6050, 4230, 3840, 3450, 3250, 3050];
const p2 = { x: 72, y: 75, w: 264, h: 123, steps: 8, label: i => i * 1000 };
let s2 = text("chart-title", 211, 32, title) + axis(30, 137) + frame(p2);
years.forEach((_, i) => {
  const x = p2.x + 7 + i * 33;
  const a = Math.round(p2.h * urban[i] / 8000), b = Math.round(p2.h * rural[i] / 8000);
  s2 += rect("urban", x, p2.y + p2.h - a, 10, a + 1) + rect("rural", x + 10, p2.y + p2.h - b, 9, b + 1);
});
s2 += rect("box", 348, 88, 69, 39) + rect("urban", 352, 95, 7, 7) + text("", 361, 102, "городское") +
  rect("rural", 352, 114, 7, 7) + text("", 361, 121, "сельское");
document.getElementById("count").innerHTML = svg(423, 245, s2);
```
